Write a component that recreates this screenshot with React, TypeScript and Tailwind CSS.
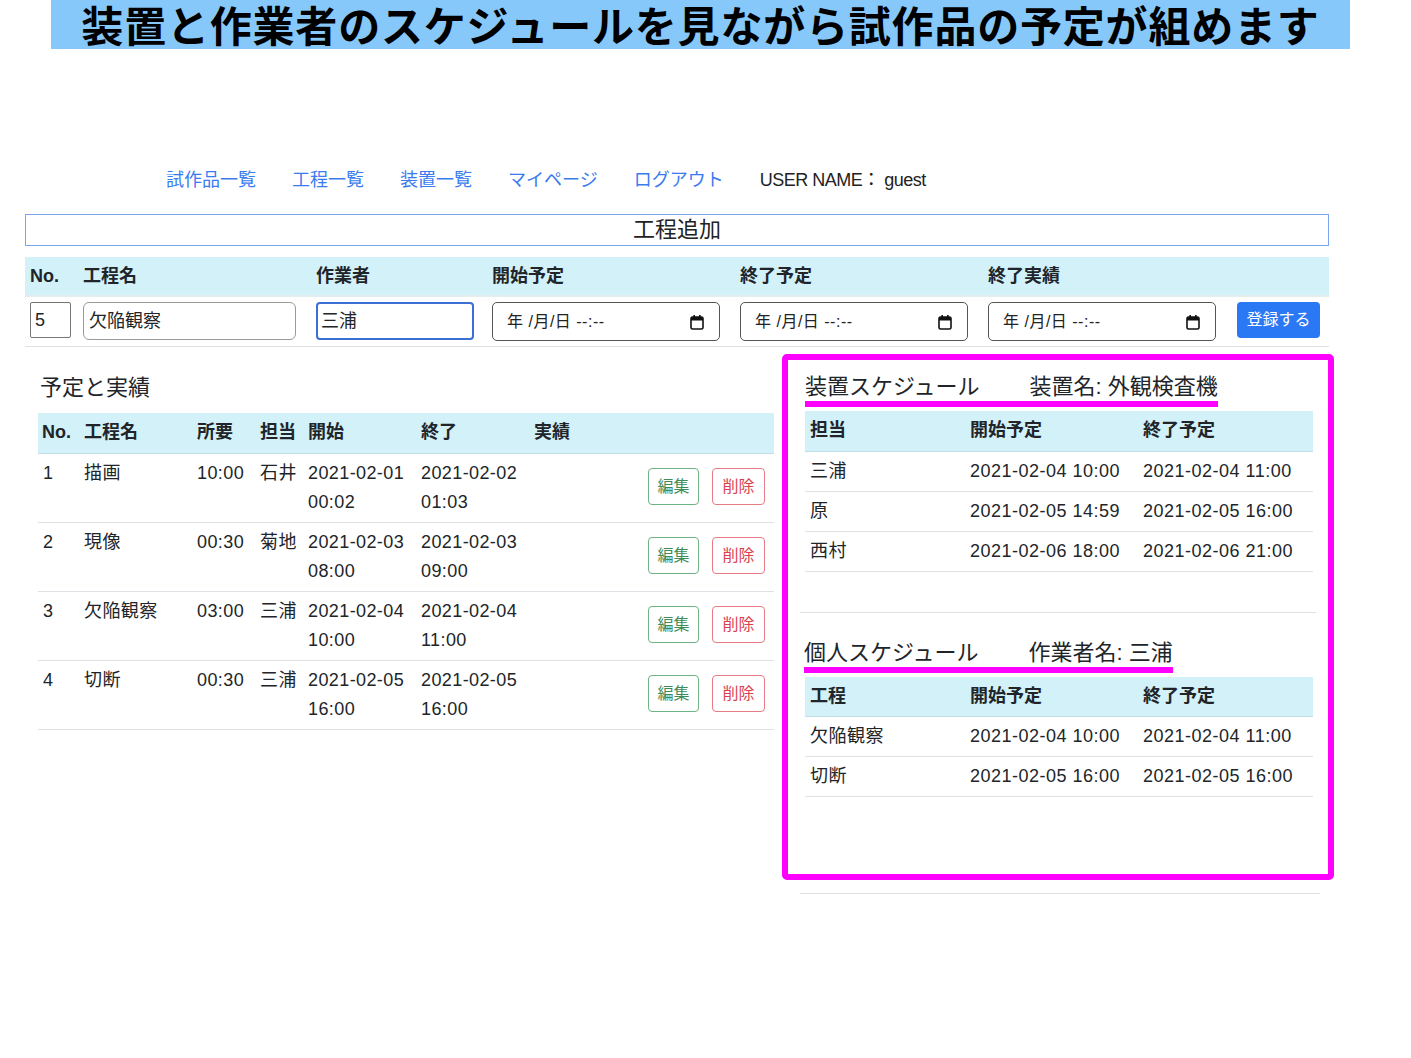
import React from 'react';

const navLinks = ['試作品一覧', '工程一覧', '装置一覧', 'マイページ', 'ログアウト'];

const processRows = [
    { no: 1, name: '描画', dur: '10:00', who: '石井', start: ['2021-02-01', '00:02'], end: ['2021-02-02', '01:03'] },
    { no: 2, name: '現像', dur: '00:30', who: '菊地', start: ['2021-02-03', '08:00'], end: ['2021-02-03', '09:00'] },
    { no: 3, name: '欠陥観察', dur: '03:00', who: '三浦', start: ['2021-02-04', '10:00'], end: ['2021-02-04', '11:00'] },
    { no: 4, name: '切断', dur: '00:30', who: '三浦', start: ['2021-02-05', '16:00'], end: ['2021-02-05', '16:00'] },
];

const machineRows = [
    ['三浦', '2021-02-04 10:00', '2021-02-04 11:00'],
    ['原', '2021-02-05 14:59', '2021-02-05 16:00'],
    ['西村', '2021-02-06 18:00', '2021-02-06 21:00'],
];

const personRows = [
    ['欠陥観察', '2021-02-04 10:00', '2021-02-04 11:00'],
    ['切断', '2021-02-05 16:00', '2021-02-05 16:00'],
];

const CalendarIcon = () => (
    <svg width="14" height="16" viewBox="0 0 14 16">
        <rect x="1" y="3" width="12" height="12" rx="1.5" fill="none" stroke="#111" strokeWidth="1.6" />
        <rect x="1" y="3" width="12" height="3.5" fill="#111" />
        <rect x="3.4" y="1" width="1.6" height="3" fill="#111" />
        <rect x="9" y="1" width="1.6" height="3" fill="#111" />
    </svg>
);

const DateBox = () => (
    <div className="h-[39px] w-[228px] border-[1.5px] border-[#555] rounded-[5px] flex items-center justify-between pl-[14px] pr-[15px] text-[16px] tracking-[0.5px] text-[#222]">
        <span>年 /月/日 --:--</span>
        <CalendarIcon />
    </div>
);

const ScheduleTable: React.FC<{ head: string[]; rows: string[][] }> = ({ head, rows }) => (
    <table className="w-[508px] table-fixed border-collapse text-[18px]">
        <colgroup>
            <col className="w-[160px]" />
            <col className="w-[173px]" />
            <col />
        </colgroup>
        <thead>
            <tr className="bg-[#d3f1f9] h-[40px] border-b border-[#c3dde4]">
                {head.map(h => (
                    <th key={h} className="text-left font-bold pl-[5px]">{h}</th>
                ))}
            </tr>
        </thead>
        <tbody>
            {rows.map((r, i) => (
                <tr key={i} className="h-[40px] border-b border-[#dee2e6] tracking-[0.5px]">
                    {r.map((c, j) => (
                        <td key={j} className="pl-[5px]">{c}</td>
                    ))}
                </tr>
            ))}
        </tbody>
    </table>
);

export default function App() {
    return (
        <div className="min-h-screen bg-white text-[#212529] font-['Liberation_Sans','Noto_Sans_CJK_JP',sans-serif] pb-[150px]">
            <div className="ml-[51px] w-[1299px] h-[49px] bg-[#87c8fa] text-center text-black font-bold text-[42px] tracking-[0.8px] leading-[48px] font-['Noto_Sans_CJK_JP',sans-serif]">
                装置と作業者のスケジュールを見ながら試作品の予定が組めます
            </div>

            <nav className="mt-[119px] pl-[166px] flex items-center gap-[36px] text-[18px] leading-[24px]">
                {navLinks.map(l => (
                    <a key={l} className="text-[#3a7bf0]">{l}</a>
                ))}
                <span className="text-[#222] tracking-[-0.5px]">USER NAME： guest</span>
            </nav>

            <div className="ml-[25px] w-[1304px]">
                <div className="mt-[22px] h-[32px] border border-[#7aa5ee] text-center text-[22px] leading-[30px] text-[#222]">
                    工程追加
                </div>

                <div className="mt-[11px] grid grid-cols-[53px_233px_176px_248px_248px_249px_97px]">
                    {['No.', '工程名', '作業者', '開始予定', '終了予定', '終了実績', ''].map((h, i) => (
                        <div key={i} className="bg-[#d3f1f9] h-[40px] border-b-2 border-[#e3eef1] pl-[5px] flex items-center font-bold text-[18px]">
                            {h}
                        </div>
                    ))}
                    <div className="pl-[5px] pt-[5px] h-[50px] border-b border-[#dee2e6]">
                        <div className="w-[41px] h-[36px] border border-[#767676] rounded-[2px] pl-[4px] text-[18px] leading-[34px]">5</div>
                    </div>
                    <div className="pl-[5px] pt-[5px] h-[50px] border-b border-[#dee2e6]">
                        <div className="w-[213px] h-[38px] border border-[#999] rounded-[6px] pl-[5px] text-[18px] leading-[36px]">欠陥観察</div>
                    </div>
                    <div className="pl-[5px] pt-[5px] h-[50px] border-b border-[#dee2e6]">
                        <div className="w-[158px] h-[38px] border-2 border-[#3b6fd6] rounded-[4px] pl-[3px] text-[18px] leading-[34px]">三浦</div>
                    </div>
                    <div className="pl-[5px] pt-[5px] h-[50px] border-b border-[#dee2e6]"><DateBox /></div>
                    <div className="pl-[5px] pt-[5px] h-[50px] border-b border-[#dee2e6]"><DateBox /></div>
                    <div className="pl-[5px] pt-[5px] h-[50px] border-b border-[#dee2e6]"><DateBox /></div>
                    <div className="pl-[5px] pt-[5px] h-[50px] border-b border-[#dee2e6]">
                        <button className="w-[83px] h-[36px] bg-[#2b78f5] text-white rounded-[4px] text-[16px]">登録する</button>
                    </div>
                </div>

                <div className="flex">
                    <div className="w-[757px] shrink-0 pl-[13px] pr-[6px]">
                        <h2 className="mt-[29px] pl-[2px] text-[22px] leading-[24px]">予定と実績</h2>
                        <table className="mt-[13px] w-[736px] table-fixed border-collapse text-[18px]">
                            <colgroup>
                                <col className="w-[42px]" />
                                <col className="w-[113px]" />
                                <col className="w-[63px]" />
                                <col className="w-[48px]" />
                                <col className="w-[113px]" />
                                <col className="w-[113px]" />
                                <col className="w-[110px]" />
                                <col />
                            </colgroup>
                            <thead>
                                <tr className="bg-[#d3f1f9] h-[40px] border-b border-[#c3dde4]">
                                    {['No.', '工程名', '所要', '担当', '開始', '終了', '実績', ''].map((h, i) => (
                                        <th key={i} className="text-left font-bold pl-[4px]">{h}</th>
                                    ))}
                                </tr>
                            </thead>
                            <tbody>
                                {processRows.map(r => (
                                    <tr key={r.no} className="border-b border-[#dee2e6] align-top leading-[29px] tracking-[0.4px]">
                                        <td className="pl-[5px] py-[5px]">{r.no}</td>
                                        <td className="pl-[4px] py-[5px]">{r.name}</td>
                                        <td className="pl-[4px] py-[5px]">{r.dur}</td>
                                        <td className="pl-[4px] py-[5px]">{r.who}</td>
                                        <td className="pl-[4px] py-[5px]">{r.start[0]}<br />{r.start[1]}</td>
                                        <td className="pl-[4px] py-[5px]">{r.end[0]}<br />{r.end[1]}</td>
                                        <td className="py-[5px]"></td>
                                        <td className="align-middle pr-[9px] pb-[3px] tracking-normal">
                                            <div className="flex justify-end gap-[13px] text-[16px]">
                                                <button className="w-[51px] h-[37px] border border-[#6fb384] text-[#3f8b58] rounded-[4px]">編集</button>
                                                <button className="w-[53px] h-[37px] border border-[#e77b85] text-[#dc3f4f] rounded-[4px]">削除</button>
                                            </div>
                                        </td>
                                    </tr>
                                ))}
                            </tbody>
                        </table>
                    </div>

                    <div className="shrink-0 w-[552px]">
                        <div className="mt-[7px] border-[6px] border-[#ff00ff] rounded-[5px] px-[17px] pt-[15px] pb-[77px]">
                            <h3 className="text-[22px] leading-[24px]">
                                <span className="inline-block pb-[2px] border-b-[6px] border-[#ff00ff]">
                                    装置スケジュール<span className="ml-[50px]">装置名: 外観検査機</span>
                                </span>
                            </h3>
                            <div className="mt-[4px]">
                                <ScheduleTable head={['担当', '開始予定', '終了予定']} rows={machineRows} />
                            </div>
                            <div className="mt-[40px] -mx-[5px] border-t border-[#dee2e6]" />
                            <h3 className="mt-[28px] text-[22px] leading-[24px]">
                                <span className="inline-block pb-[2px] border-b-[6px] border-[#ff00ff] -ml-[1px]">
                                    個人スケジュール<span className="ml-[50px]">作業者名: 三浦</span>
                                </span>
                            </h3>
                            <div className="mt-[4px]">
                                <ScheduleTable head={['工程', '開始予定', '終了予定']} rows={personRows} />
                            </div>
                        </div>
                        <div className="mt-[13px] ml-[18px] w-[520px] border-t border-[#dee2e6]" />
                    </div>
                </div>
            </div>
        </div>
    );
}
